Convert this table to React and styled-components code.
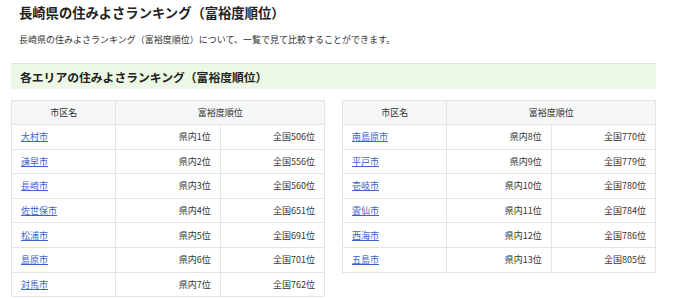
import React from "react";
import styled, { createGlobalStyle } from "styled-components";

const GlobalStyle = createGlobalStyle`
  body {
    margin: 0;
    background: #fff;
    font-family: "Noto Sans CJK JP", "Noto Sans", sans-serif;
    color: #333;
  }
`;

const Page = styled.div`
  width: 645px;
  padding: 5px 0 0 11px;
`;

const Title = styled.h1`
  margin: 0;
  padding-left: 8px;
  font-size: 13.3px;
  line-height: 16px;
  font-weight: bold;
  color: #222;
`;

const Lead = styled.p`
  margin: 12px 0 0;
  padding-left: 8px;
  font-size: 9px;
  line-height: 13px;
  color: #333;
`;

const SectionHeading = styled.h2`
  margin: 17px 0 0;
  padding: 0 9px;
  height: 25px;
  line-height: 25px;
  font-size: 11.8px;
  font-weight: bold;
  color: #222;
  background: #ecf7e5;
  border-top: 1px solid #dfe3dc;
`;

const Tables = styled.div`
  display: flex;
  gap: 17px;
  margin-top: 11px;
  align-items: flex-start;
`;

const Table = styled.table`
  width: 314px;
  border-collapse: collapse;
  table-layout: fixed;
  font-size: 9px;
`;

const HeadCell = styled.th`
  height: 23px;
  padding: 0;
  font-weight: normal;
  color: #333;
  background: #f6f7f8;
  border: 1px solid #e4e4e4;
  text-align: center;
`;

const Cell = styled.td`
  height: 23.6px;
  padding: 0 9px;
  border: 1px solid #e4e4e4;
  text-align: ${({ align }) => align || "left"};
  color: #333;
`;

const CityLink = styled.a`
  color: #3d63cf;
  text-decoration: underline;
`;

const leftRows = [
  ["大村市", 1, 506],
  ["諫早市", 2, 556],
  ["長崎市", 3, 560],
  ["佐世保市", 4, 651],
  ["松浦市", 5, 691],
  ["島原市", 6, 701],
  ["対馬市", 7, 762]
];

const rightRows = [
  ["南島原市", 8, 770],
  ["平戸市", 9, 779],
  ["壱岐市", 10, 780],
  ["雲仙市", 11, 784],
  ["西海市", 12, 786],
  ["五島市", 13, 805]
];

const RankTable = ({ rows }) => (
  <Table>
    <thead>
      <tr>
        <HeadCell>市区名</HeadCell>
        <HeadCell colSpan={2}>富裕度順位</HeadCell>
      </tr>
    </thead>
    <tbody>
      {rows.map(([city, pref, national]) => (
        <tr key={city}>
          <Cell>
            <CityLink href="#">{city}</CityLink>
          </Cell>
          <Cell align="right">県内{pref}位</Cell>
          <Cell align="right">全国{national}位</Cell>
        </tr>
      ))}
    </tbody>
  </Table>
);

export default function App() {
  return (
    <>
      <GlobalStyle />
      <Page>
        <Title>長崎県の住みよさランキング（富裕度順位）</Title>
        <Lead>
          長崎県の住みよさランキング（富裕度順位）について、一覧で見て比較することができます。
        </Lead>
        <SectionHeading>各エリアの住みよさランキング（富裕度順位）</SectionHeading>
        <Tables>
          <RankTable rows={leftRows} />
          <RankTable rows={rightRows} />
        </Tables>
      </Page>
    </>
  );
}
